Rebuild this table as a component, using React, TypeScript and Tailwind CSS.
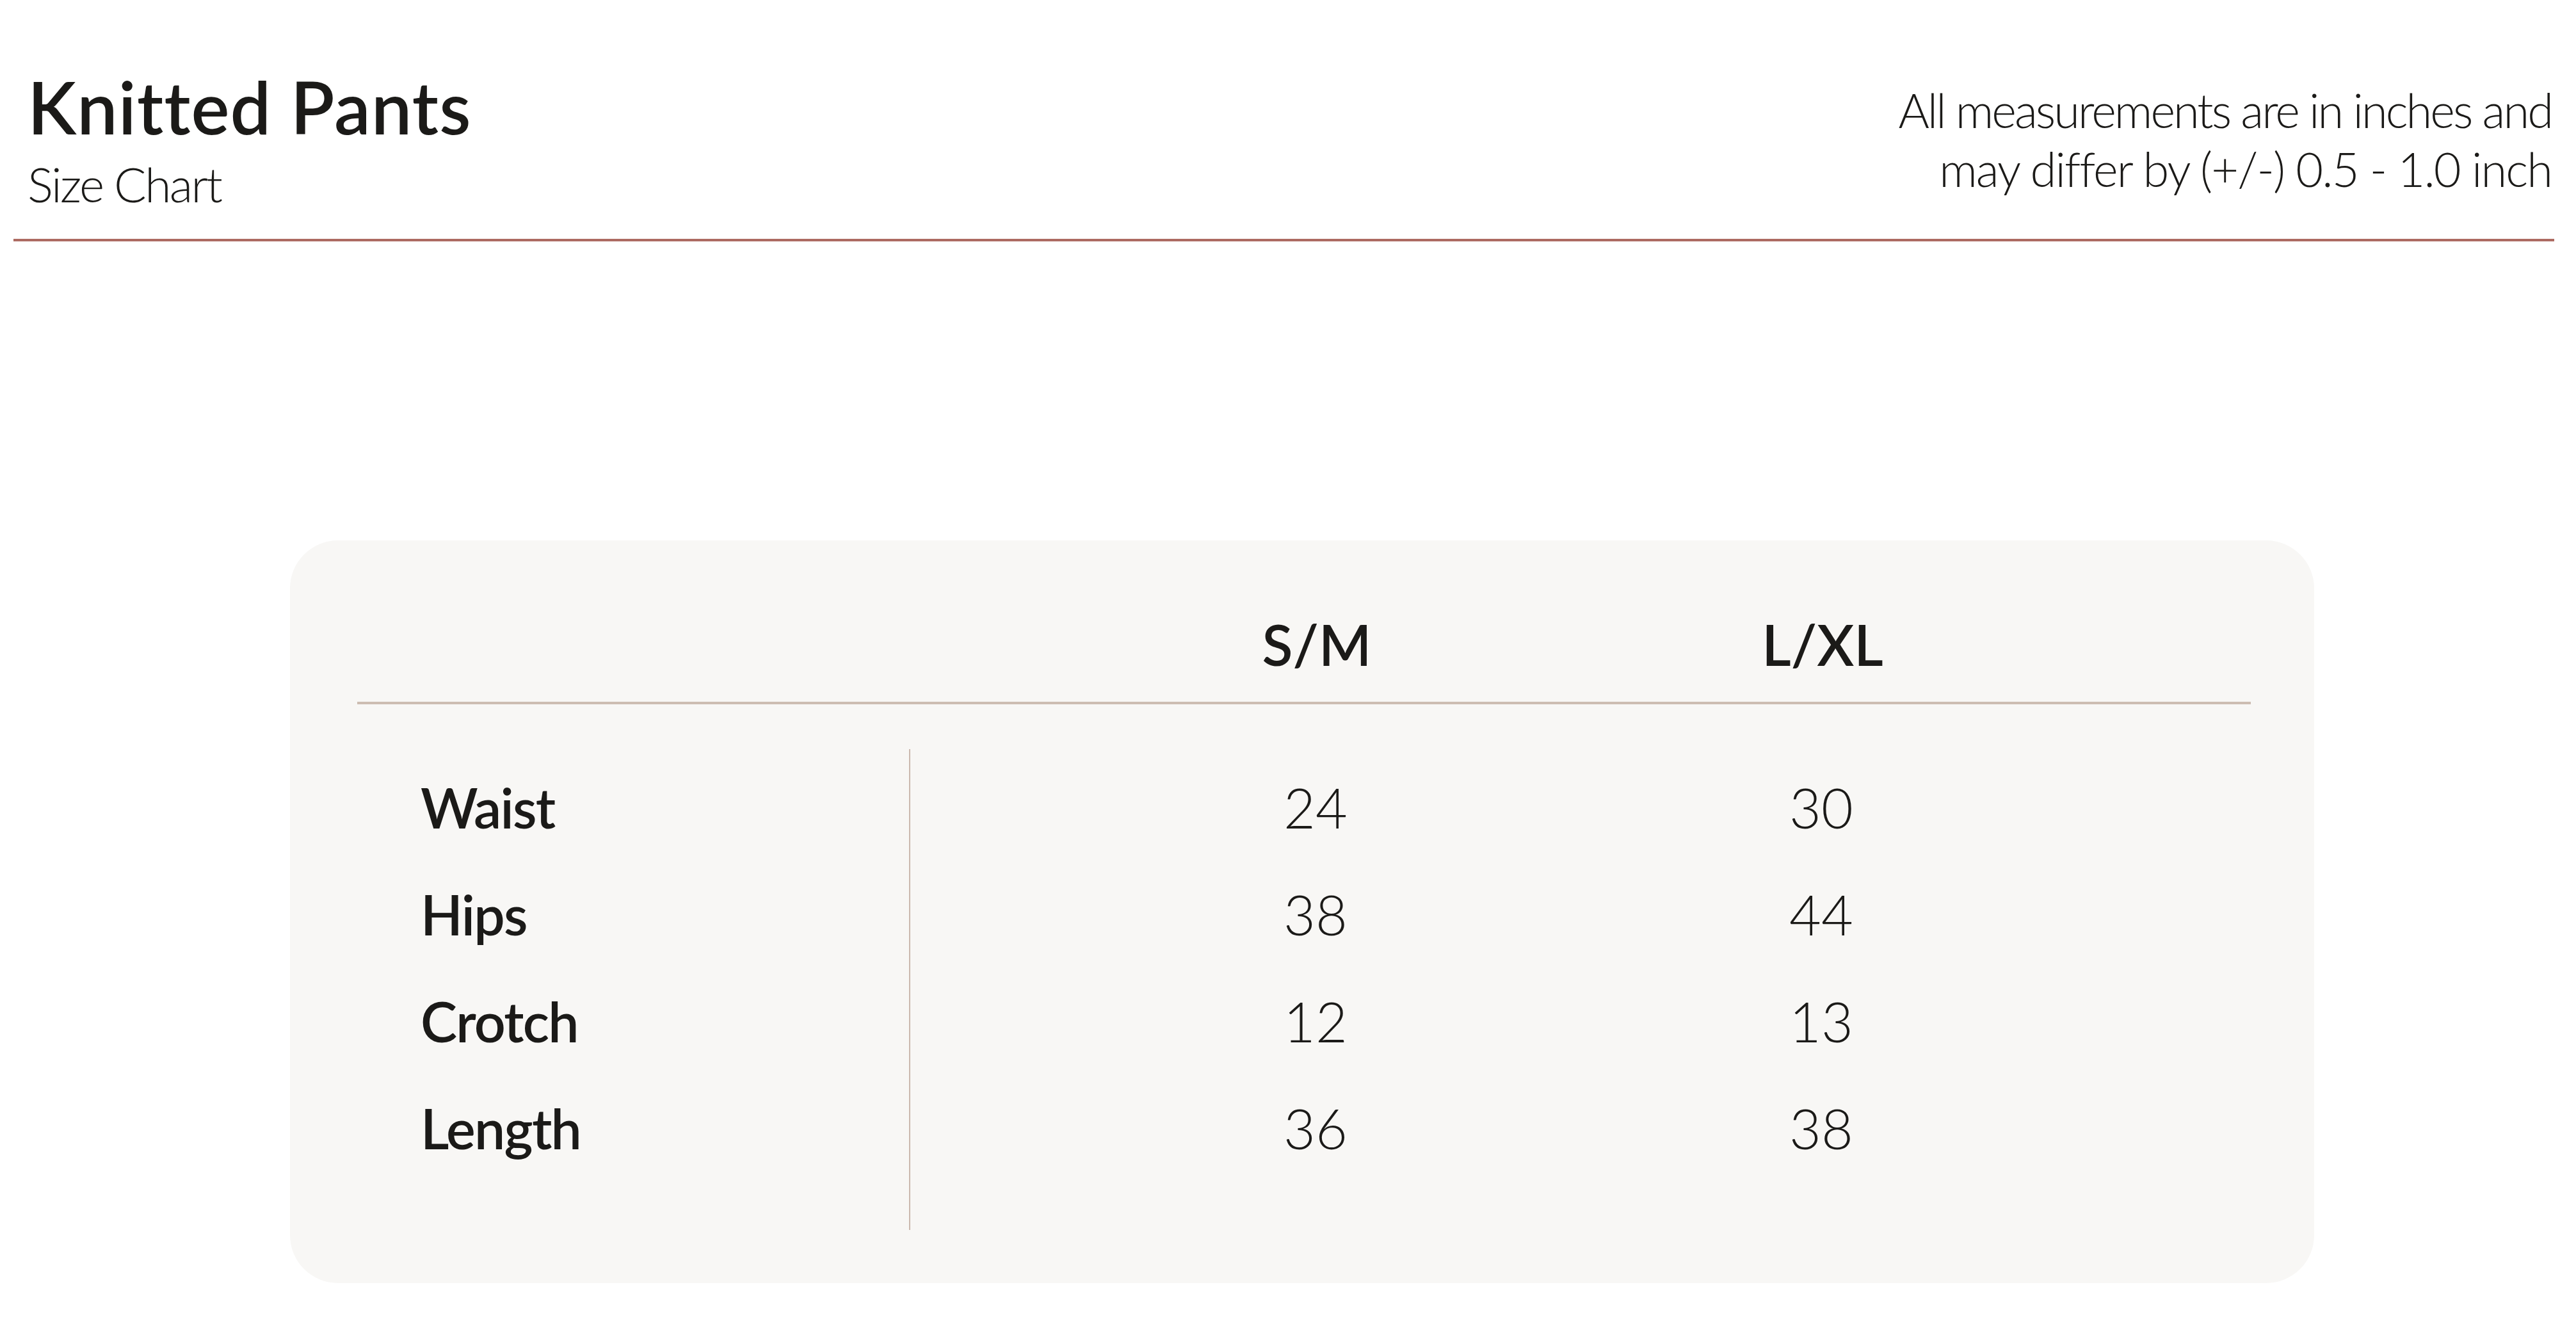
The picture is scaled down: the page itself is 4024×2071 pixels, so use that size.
import React from 'react';

type SizeRow = {
  label: string;
  sm: string;
  lxl: string;
};

const rows: SizeRow[] = [
  { label: 'Waist', sm: '24', lxl: '30' },
  { label: 'Hips', sm: '38', lxl: '44' },
  { label: 'Crotch', sm: '12', lxl: '13' },
  { label: 'Length', sm: '36', lxl: '38' },
];

const font = "font-['Lato','Noto_Sans',sans-serif]";

export default function App() {
  return (
    <main className={`min-h-screen bg-white text-[#1b1a18] ${font}`}>
      <div className="pl-[21px] pr-[34px]">
        <header className="flex items-start justify-between border-b-4 border-[#ad6b62] pb-[48px] pl-[22px] pr-[4px] pt-[110px]">
          <div>
            <h1 className="text-[113px] font-semibold leading-none tracking-[0.01em]">
              Knitted Pants
            </h1>
            <p className="mt-[27px] text-[75px] font-light leading-none tracking-[-0.035em]">
              Size Chart
            </p>
          </div>
          <div className="pt-[16px] text-right text-[74px] font-light leading-[92px]">
            <p className="tracking-[-0.04em]">All measurements are in inches and</p>
            <p className="tracking-[-0.026em]">may differ by (+/-) 0.5 - 1.0 inch</p>
          </div>
        </header>
      </div>

      <section className="ml-[453px] mt-[467px] h-[1160px] w-[3162px] rounded-[75px] bg-[#f8f7f5] pl-[105px] pr-[99px]">
        <div className="flex border-b-4 border-[#cdbdb2] pb-[46px] pt-[118px] text-[88px] font-semibold leading-[88px]">
          <div className="w-[1104px] shrink-0" />
          <div className="w-[790px] text-center">S/M</div>
          <div className="w-[790px] text-center">L/XL</div>
        </div>

        <div className="mt-[70px] flex">
          <div className="w-[864px] shrink-0 border-r-2 border-[#cbb9ae] pb-[76px] pl-[99px] pt-[7px]">
            {rows.map((row) => (
              <p
                key={row.label}
                className="text-[86px] font-semibold leading-[167px] tracking-[-0.02em]"
              >
                {row.label}
              </p>
            ))}
          </div>
          <div className="pl-[238px] pt-[7px]">
            {rows.map((row) => (
              <div
                key={row.label}
                className="flex text-[86px] font-light leading-[167px]"
              >
                <span className="w-[790px] text-center">{row.sm}</span>
                <span className="w-[790px] text-center">{row.lxl}</span>
              </div>
            ))}
          </div>
        </div>
      </section>
    </main>
  );
}
